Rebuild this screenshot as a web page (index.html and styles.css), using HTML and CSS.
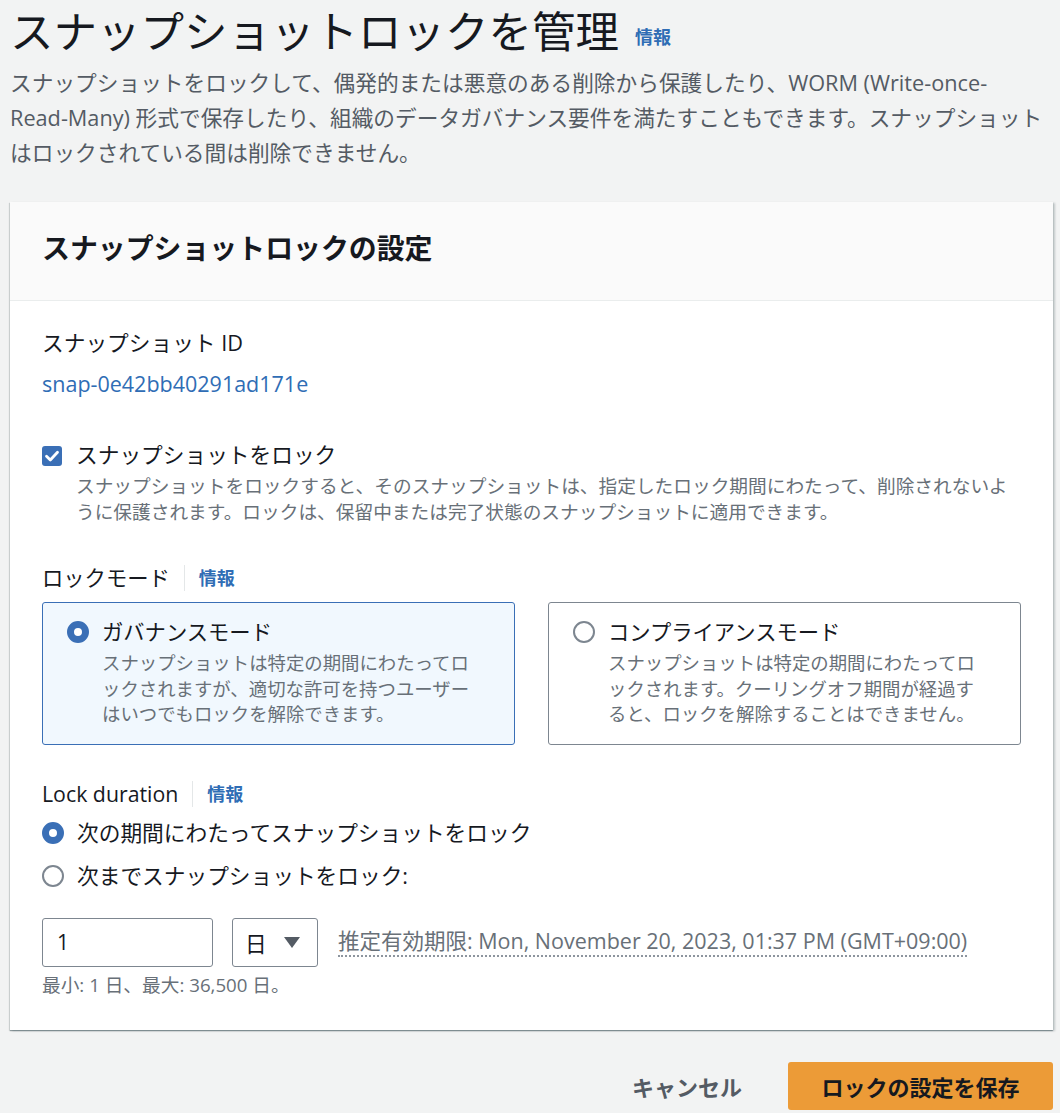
FILE: index.html
```html
<!DOCTYPE html>
<html lang="ja">
<head>
<meta charset="utf-8">
<title>スナップショットロックを管理</title>
<link rel="stylesheet" href="styles.css">
</head>
<body>
<div class="page">
  <header class="page-header">
    <h1 class="page-title"><span>スナップショットロックを管理</span><a class="info-link title-info">情報</a></h1>
    <p class="page-desc">スナップショットをロックして、偶発的または悪意のある削除から保護したり、WORM (Write-once-<span class="nowrap">Read-Many)</span> 形式で保存したり、組織のデータガバナンス要件を満たすこともできます。スナップショットはロックされている間は削除できません。</p>
  </header>

  <section class="card">
    <div class="card-header">
      <h2 class="card-title">スナップショットロックの設定</h2>
    </div>
    <div class="card-body">
      <div class="kv">
        <div class="kv-label">スナップショット ID</div>
        <a class="kv-value">snap-0e42bb40291ad171e</a>
      </div>

      <div class="check-row">
        <span class="checkbox">
          <svg viewBox="0 0 20 20" width="20" height="20"><path d="M4.5 10.2 L8.3 14 L15.5 6.2" fill="none" stroke="#fff" stroke-width="2.8" stroke-linecap="round" stroke-linejoin="round"/></svg>
        </span>
        <div class="check-text">
          <div class="check-label">スナップショットをロック</div>
          <div class="check-desc">スナップショットをロックすると、そのスナップショットは、指定したロック期間にわたって、削除されないように保護されます。ロックは、保留中または完了状態のスナップショットに適用できます。</div>
        </div>
      </div>

      <div class="field mode-field">
        <div class="field-label"><span>ロックモード</span><span class="divider"></span><a class="info-link">情報</a></div>
        <div class="tiles">
          <div class="tile selected">
            <span class="radio checked"></span>
            <div class="tile-text">
              <div class="tile-title">ガバナンスモード</div>
              <div class="tile-desc">スナップショットは特定の期間にわたってロックされますが、適切な許可を持つユーザーはいつでもロックを解除できます。</div>
            </div>
          </div>
          <div class="tile">
            <span class="radio"></span>
            <div class="tile-text">
              <div class="tile-title">コンプライアンスモード</div>
              <div class="tile-desc">スナップショットは特定の期間にわたってロックされます。クーリングオフ期間が経過すると、ロックを解除することはできません。</div>
            </div>
          </div>
        </div>
      </div>

      <div class="field duration-field">
        <div class="field-label"><span>Lock duration</span><span class="divider"></span><a class="info-link">情報</a></div>
        <div class="radio-group">
          <div class="radio-row"><span class="radio checked"></span><span class="radio-label">次の期間にわたってスナップショットをロック</span></div>
          <div class="radio-row"><span class="radio"></span><span class="radio-label">次までスナップショットをロック:</span></div>
        </div>
        <div class="duration-inputs">
          <div class="text-input">1</div>
          <div class="select-input"><span>日</span><span class="caret"></span></div>
          <span class="estimate">推定有効期限: Mon, November 20, 2023, 01:37 PM (GMT+09:00)</span>
        </div>
        <div class="hint">最小: 1 日、最大: 36,500 日。</div>
      </div>
    </div>
  </section>

  <div class="actions">
    <button class="btn btn-link">キャンセル</button>
    <button class="btn btn-primary">ロックの設定を保存</button>
  </div>
</div>
</body>
</html>
```

FILE: styles.css
```css
* { box-sizing: border-box; }

html, body {
  margin: 0;
  background: #f2f3f3;
}

body {
  font-family: "Open Sans", "Noto Sans CJK JP", sans-serif;
  color: #16191f;
  line-break: loose;
}

.page {
  padding: 4px 7px 0 10px;
}

.nowrap {
  white-space: nowrap;
}

.page-title {
  margin: 0;
  font-size: 43.5px;
  font-weight: 400;
  line-height: 56px;
  display: flex;
  align-items: baseline;
  gap: 16px;
  color: #16191f;
}

.info-link {
  color: #2f6db5;
  font-weight: 700;
  font-size: 17px;
  line-height: 24px;
}

.title-info {
  font-size: 18px;
  position: relative;
  top: -4px;
}

.page-desc {
  margin: 5px 0 0;
  font-size: 21.7px;
  line-height: 35px;
  color: #545b64;
}

.card {
  margin-top: 32px;
  background: #fff;
  box-shadow: 0 1px 1px 0 rgba(0, 28, 36, 0.3), 2px 1px 2px 0 rgba(0, 28, 36, 0.2), -1px 1px 1px 0 rgba(0, 28, 36, 0.12);
}

.card-header {
  background: #fafafa;
  border-bottom: 1px solid #eaeded;
  padding: 29px 32px 35px;
}

.card-title {
  margin: 0;
  font-size: 27.9px;
  line-height: 34px;
  font-weight: 700;
}

.card-body {
  padding: 28px 32px 33px;
}

.kv-label {
  font-size: 21.7px;
  line-height: 28px;
}

.kv-value {
  display: block;
  margin-top: 13px;
  font-size: 21.5px;
  line-height: 28px;
  color: #2f6db5;
}

.check-row {
  display: flex;
  gap: 14px;
  margin-top: 42px;
}

.checkbox {
  flex: none;
  width: 20px;
  height: 20px;
  margin-top: 6px;
  border-radius: 3px;
  background: #3a6fb6;
  display: flex;
}

.check-label {
  font-size: 21.7px;
  line-height: 30px;
}

.check-desc {
  margin-top: 3px;
  font-size: 18.7px;
  line-height: 26px;
  color: #687078;
}

.field {
  margin-top: 38px;
}

.duration-field {
  margin-top: 34px;
}

.field-label {
  display: flex;
  align-items: center;
  font-size: 21.3px;
  line-height: 30px;
}

.divider {
  width: 1px;
  height: 26px;
  background: #e4e7e8;
  margin: 0 14px;
}

.field-label .info-link {
  font-size: 18px;
}

.tiles {
  display: grid;
  grid-template-columns: 1fr 1fr;
  gap: 33px;
  margin-top: 9px;
}

.tile {
  display: flex;
  gap: 13px;
  border: 1px solid #7d8690;
  border-radius: 3px;
  padding: 14px 30px 17px 24px;
  background: #fff;
}

.tile.selected {
  border-color: #3a6fb6;
  background: #f1f8fe;
}

.radio {
  flex: none;
  width: 22px;
  height: 22px;
  border-radius: 50%;
  border: 2px solid #7d8690;
  background: #fff;
  margin-top: 4px;
}

.radio.checked {
  border: 7px solid #3a6fb6;
}

.tile-title {
  font-size: 21.3px;
  line-height: 30px;
}

.tile-desc {
  margin-top: 3px;
  font-size: 18.4px;
  line-height: 25.5px;
  color: #687078;
}

.radio-group {
  display: flex;
  flex-direction: column;
  gap: 13px;
  margin-top: 9px;
}

.radio-row {
  display: flex;
  gap: 13px;
  align-items: flex-start;
}

.radio-label {
  font-size: 21.7px;
  line-height: 30px;
}

.duration-inputs {
  display: flex;
  align-items: center;
  margin-top: 27px;
  gap: 19px;
}

.text-input {
  width: 171px;
  height: 49px;
  border: 1px solid #7d8690;
  border-radius: 3px;
  padding: 0 14px;
  font-size: 21px;
  line-height: 47px;
  background: #fff;
}

.select-input {
  width: 86px;
  height: 49px;
  border: 1px solid #7d8690;
  border-radius: 3px;
  padding: 0 17px 0 12px;
  display: flex;
  align-items: center;
  justify-content: space-between;
  font-size: 21.7px;
  background: #fff;
}

.caret {
  width: 0;
  height: 0;
  border-left: 8px solid transparent;
  border-right: 8px solid transparent;
  border-top: 11px solid #545b64;
}

.estimate {
  margin-left: 1px;
  font-size: 21.5px;
  line-height: 28px;
  color: #687078;
  border-bottom: 2px dotted #8d959e;
}

.hint {
  margin-top: 6px;
  font-size: 18.7px;
  line-height: 24px;
  color: #687078;
}

.actions {
  display: flex;
  justify-content: flex-end;
  align-items: center;
  gap: 26px;
  margin-top: 32px;
}

.btn {
  font-family: inherit;
  font-weight: 700;
  font-size: 22px;
  height: 48px;
  border-radius: 3px;
  border: none;
  cursor: pointer;
}

.btn-link {
  background: transparent;
  color: #545b64;
  padding: 0 20px;
}

.btn-primary {
  background: #ec9b37;
  color: #16191f;
  padding: 0 33px;
  width: 265px;
}
```
